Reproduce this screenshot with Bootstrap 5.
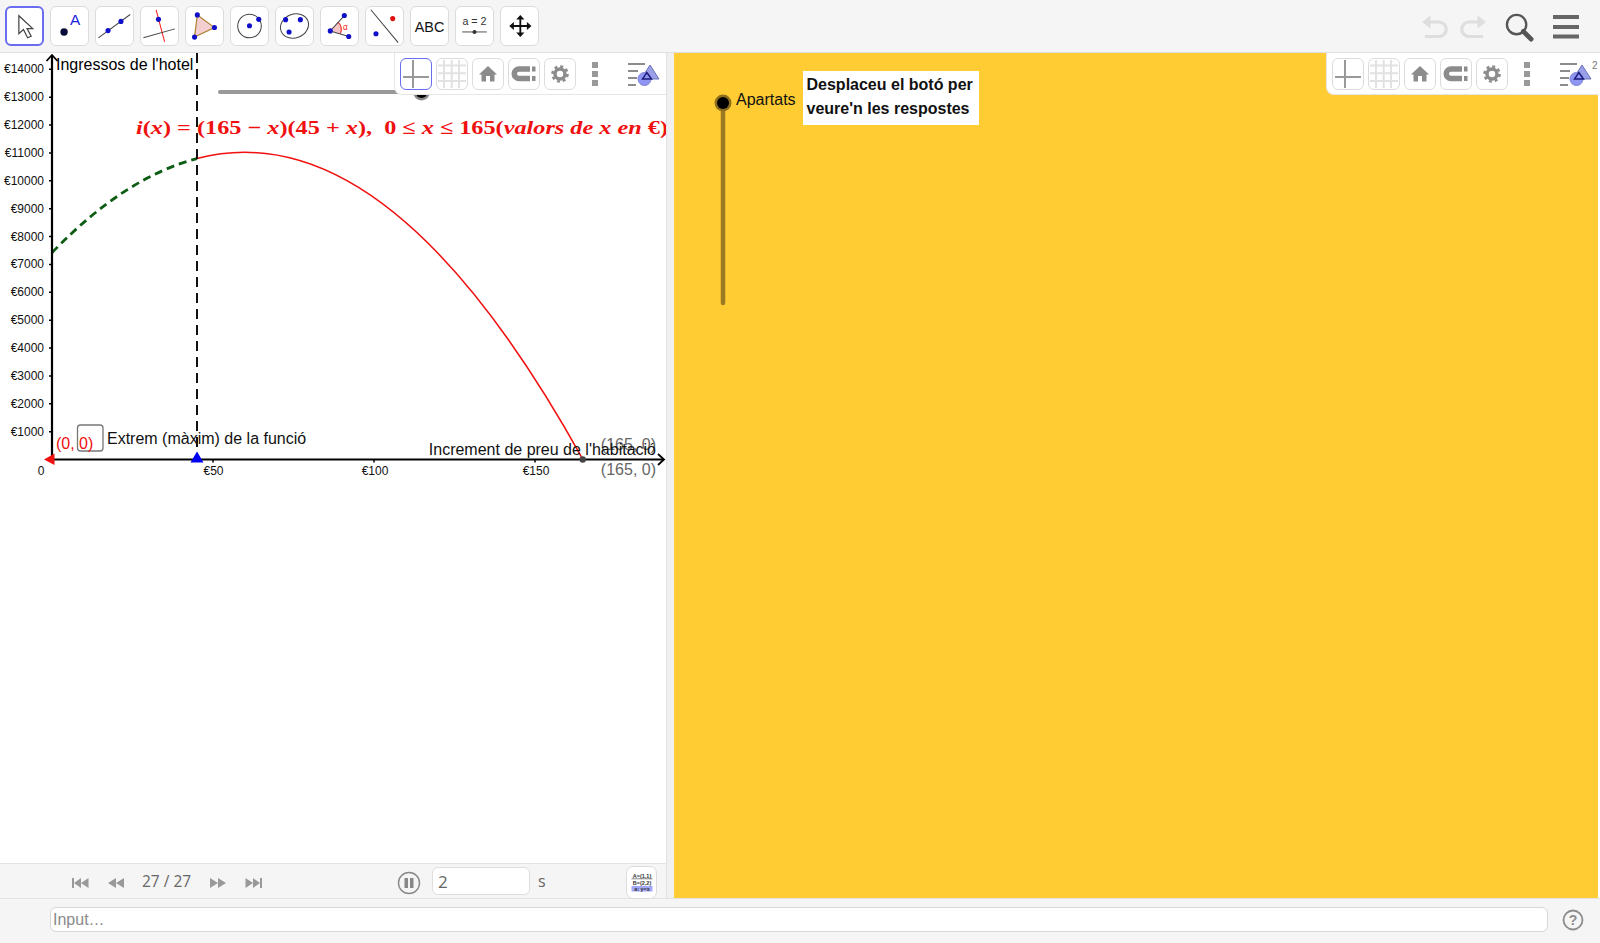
<!DOCTYPE html>
<html lang="en">
<head>
<meta charset="UTF-8">
<title>GeoGebra</title>
<link href="https://cdn.jsdelivr.net/npm/bootstrap@5.3.0/dist/css/bootstrap.min.css" rel="stylesheet">
<style>
  html, body { height: 100%; overflow: hidden; font-family: "Liberation Sans", Arial, sans-serif; }
  svg { display: block; }
  svg text { font-family: "Liberation Sans", Arial, sans-serif; }
  .top-bar { height: 53px; background: #f5f5f5; border-bottom: 1px solid #e0e0e0; padding: 6px 0 0 5px; flex: none; }
  .tool-row { gap: 6px; }
  .tool-btn { width: 39px; height: 40px; background: #fff; border: 1px solid #dcdcdc; border-radius: 6px; padding: 0; }
  .tool-btn.on { border: 2px solid #6a6df0; }
  .tool-btn svg { margin: -1px; }
  .tool-btn.on svg { margin: -2px; }
  .top-right { margin-left: auto; padding-right: 21px; }
  .undo-ico { margin-top: 9px; margin-right: 10px; }
  .redo-ico { margin-top: 9px; margin-right: 19px; }
  .find-ico { margin-top: 7px; margin-right: 19px; }
  .menu-ico { margin-top: 9px; }
  .gfx-panel { width: 666px; flex: none; }
  .gfx-canvas { flex: 1 1 auto; position: relative; background: #fff; min-height: 0; }
  .splitter { width: 8px; flex: none; background: #f0f0f0; border-left: 1px solid #e2e2e2; }
  .yellow-panel { flex: 1 1 auto; position: relative; background: #ffcc33; margin-right: 2px; }
  .float-bar { position: absolute; top: 0; right: 0; width: 272px; height: 42px; background: #fff; border-bottom: 1px solid #e6e6e6; border-left: 1px solid #e6e6e6; border-bottom-left-radius: 8px; padding: 5px 0 0 5px; gap: 4px; }
  .mini-btn { width: 32px; height: 32px; border: 1px solid #dcdcdc; border-radius: 6px; background: #fff; padding: 0; flex: none; }
  .mini-btn.on { border-color: #6a6df0; }
  .mini-btn svg { margin: -1px; }
  .dots-ico { margin-left: 9px; }
  .style-ico { margin-left: 22px; }
  .play-bar { height: 35px; flex: none; background: #f5f5f5; border-top: 1px solid #e2e2e2; position: relative; color: #666; }
  .play-ico { position: absolute; top: 14px; }
  .play-count { position: absolute; left: 142px; top: 7px; font-family: "Open Sans", sans-serif; font-size: 15.500px; line-height: 20px; }
  .play-pause { position: absolute; left: 397px; top: 7px; }
  .play-input { position: absolute; left: 432px; top: 3px; width: 98px; height: 28px; border: 1px solid #dedede; border-radius: 6px; background: #fff; padding: 0 5px; font-family: "Open Sans", sans-serif; font-size: 17px; color: #666; box-shadow: none; min-height: 0; }
  .play-s { position: absolute; left: 538px; top: 7px; font-family: "Open Sans", sans-serif; font-size: 16px; line-height: 20px; }
  .table-btn { position: absolute; left: 626px; top: 2px; width: 31px; height: 33px; background: #fff; border: 1px solid #dcdcdc; border-radius: 7px; padding: 0; }
  .input-bar { height: 45px; flex: none; background: #f5f5f5; border-top: 1px solid #e2e2e2; padding: 8px 0 0 50px; }
  .algebra-input { width: 1498px; height: 25px; min-height: 0; border: 1px solid #d8d8d8; border-radius: 6px; padding: 0 2px; font-size: 16px; color: #555; box-shadow: none; }
  .algebra-input::placeholder { color: #8a8a8a; opacity: 1; }
  .help-ico { margin-left: 14px; margin-top: 2px; }
  .style-two { left: 265px; top: 8px; font-size: 10px; line-height: 10px; color: #777; }
</style>
</head>
<body class="d-flex flex-column">

<svg width="0" height="0" class="position-absolute">
  <defs>
    <symbol id="ico-axes" viewBox="0 0 32 32"><path d="M13 2V30M3 19H29" stroke="#999" stroke-width="2" fill="none"/></symbol>
    <symbol id="ico-grid" viewBox="0 0 32 32"><path d="M8 2V30M15.700 2V30M23 2V30M2 7.500H30M2 15.300H30M2 23H30" stroke="#e2e2e2" stroke-width="2" fill="none"/></symbol>
    <symbol id="ico-home" viewBox="0 0 32 32"><path d="M16 8L25 16.500H22.500V23.500H18V18H14V23.500H9.500V16.500H7Z" fill="#8c8c8c"/></symbol>
    <symbol id="ico-magnet" viewBox="0 0 32 32"><path d="M22 11H11a4.500 4.500 0 0 0 0 9.500H22" stroke="#8c8c8c" stroke-width="5.500" fill="none"/><path d="M24 8.500h3.500v5H24zM24 18h3.500v5H24z" fill="#8c8c8c"/></symbol>
    <symbol id="ico-gear" viewBox="0 0 32 32"><circle cx="16" cy="16" r="5" fill="none" stroke="#8c8c8c" stroke-width="3.500"/><circle cx="16" cy="16" r="7.500" fill="none" stroke="#8c8c8c" stroke-width="2.600" stroke-dasharray="3 2.890"/></symbol>
    <symbol id="ico-dots" viewBox="0 0 12 32"><path d="M3 4h6v6H3zM3 13h6v6H3zM3 22h6v6H3z" fill="#999"/></symbol>
    <symbol id="ico-style" viewBox="0 0 34 32"><path d="M1 6H18M1 13H11M1 20H10M1 27H9" stroke="#8c8c8c" stroke-width="1.800" fill="none"/><path d="M23 7L32 21H14Z" fill="#9aa0e8" stroke="#6b70b8"/><circle cx="17.500" cy="21" r="6.500" fill="#8f95f2" stroke="#7a80d8"/><path d="M19.800 14.500L24.500 21H15.500Z" fill="none" stroke="#1c1c7a" stroke-width="1.400"/></symbol>
  </defs>
</svg>

<div class="top-bar d-flex">
  <div class="tool-row d-flex">
    <button class="tool-btn on"><svg width="39" height="40" viewBox="0 0 38 39"><path d="M13.500 9.500V27L18 23L22 31L25.500 29.500L21.500 22H27Z" fill="#fff" stroke="#444" stroke-width="1.200"/></svg></button>
    <button class="tool-btn"><svg width="39" height="40" viewBox="0 0 38 39"><circle cx="13.700" cy="25.300" r="3.600" fill="#0b0b3a"/><text x="19.500" y="19" font-size="15" fill="#1f1fe0">A</text></svg></button>
    <button class="tool-btn"><svg width="39" height="40" viewBox="0 0 38 39"><path d="M3.300 31L34.300 8.300" stroke="#444" stroke-width="1"/><circle cx="12.700" cy="24" r="2.500" fill="#1010c8"/><circle cx="25.300" cy="15" r="2.500" fill="#1010c8"/></svg></button>
    <button class="tool-btn"><svg width="39" height="40" viewBox="0 0 38 39"><path d="M15.700 3.700L24 35" stroke="#f02020" stroke-width="1"/><path d="M3.300 31L34 22.300" stroke="#444" stroke-width="1"/><circle cx="18" cy="13" r="2.500" fill="#1010c8"/></svg></button>
    <button class="tool-btn"><svg width="39" height="40" viewBox="0 0 38 39"><path d="M12 8.700L28.700 21L9.300 30.300Z" fill="#f3cfcf" stroke="#b08438" stroke-width="1.200"/><circle cx="12" cy="8.700" r="2.500" fill="#1010c8"/><circle cx="28.700" cy="21" r="2.500" fill="#1010c8"/><circle cx="9.300" cy="30.300" r="2.500" fill="#1010c8"/></svg></button>
    <button class="tool-btn"><svg width="39" height="40" viewBox="0 0 38 39"><circle cx="19" cy="19.500" r="11.500" fill="none" stroke="#444"/><circle cx="19" cy="19.300" r="2.500" fill="#1010c8"/><circle cx="28" cy="13" r="2.500" fill="#1010c8"/></svg></button>
    <button class="tool-btn"><svg width="39" height="40" viewBox="0 0 38 39"><ellipse cx="19" cy="19.500" rx="14" ry="11.500" transform="rotate(-22 19 19.500)" fill="none" stroke="#444"/><circle cx="10.300" cy="13.300" r="2.500" fill="#1010c8"/><circle cx="24.700" cy="13.300" r="2.500" fill="#1010c8"/><circle cx="13.700" cy="25.300" r="2.500" fill="#1010c8"/></svg></button>
    <button class="tool-btn"><svg width="39" height="40" viewBox="0 0 38 39"><path d="M10 24.300L17.500 15.700A10 10 0 0 1 20 26.800Z" fill="#f6c6c6"/><path d="M17.500 15.700A10 10 0 0 1 20 26.800" fill="none" stroke="#f02020"/><path d="M23.700 9.300L10 24.300L28 29.700" fill="none" stroke="#444"/><circle cx="23.700" cy="9.300" r="2.500" fill="#1010c8"/><circle cx="10" cy="24.300" r="2.500" fill="#1010c8"/><circle cx="28" cy="29.700" r="2.500" fill="#1010c8"/><text x="22.500" y="23" font-size="8" fill="#f02020">α</text></svg></button>
    <button class="tool-btn"><svg width="39" height="40" viewBox="0 0 38 39"><path d="M5.700 3.700L32.300 35.700" stroke="#444"/><circle cx="27" cy="12.300" r="2.500" fill="#e01010"/><circle cx="10.700" cy="27" r="2.500" fill="#1010c8"/></svg></button>
    <button class="tool-btn"><svg width="39" height="40" viewBox="0 0 38 39"><text x="19" y="25" font-size="14" text-anchor="middle" fill="#111">ABC</text></svg></button>
    <button class="tool-btn"><svg width="39" height="40" viewBox="0 0 38 39"><text x="19" y="18.500" font-size="10.500" text-anchor="middle" fill="#333">a = 2</text><path d="M7 25.300H31" stroke="#555"/><circle cx="19" cy="25.300" r="2" fill="#333"/></svg></button>
    <button class="tool-btn"><svg width="39" height="40" viewBox="0 0 38 39"><path d="M19.800 11V28M12 19.500H28" stroke="#111" stroke-width="1.800"/><path d="M19.800 8.700L23.800 13.200H15.800ZM19.800 30.300L23.800 25.800H15.800ZM9 19.500L13.500 15.500V23.500ZM30.700 19.500L26.200 15.500V23.500Z" fill="#111"/></svg></button>
  </div>
  <div class="top-right d-flex">
    <svg width="27" height="26" class="undo-ico" viewBox="0 0 27 26"><path d="M6 7H17a6.500 6.500 0 0 1 0 14.500H3" fill="none" stroke="#dedede" stroke-width="3.200"/><path d="M0 7L8.500 0.500V13.500Z" fill="#dedede"/></svg>
    <svg width="27" height="26" class="redo-ico" viewBox="0 0 27 26"><path d="M21 7H10a6.500 6.500 0 0 0 0 14.500H24" fill="none" stroke="#dedede" stroke-width="3.200"/><path d="M27 7L18.500 0.500V13.500Z" fill="#dedede"/></svg>
    <svg width="29" height="29" class="find-ico" viewBox="0 0 30 30"><circle cx="12" cy="12" r="10" fill="none" stroke="#555" stroke-width="2.400"/><path d="M19 19L27 27" stroke="#555" stroke-width="5" stroke-linecap="round"/></svg>
    <svg width="26" height="24" class="menu-ico" viewBox="0 0 26 24"><path d="M0 2H26M0 12H26M0 21.500H26" stroke="#666" stroke-width="3.800"/></svg>
  </div>
</div>

<div class="d-flex flex-grow-1" style="min-height:0">
  <div class="gfx-panel d-flex flex-column">
    <div class="gfx-canvas">
      <svg width="666" height="810" viewBox="0 53 666 810">
        <path d="M220 92H425" stroke="#999" stroke-width="4" stroke-linecap="round"/>
        <circle cx="421.500" cy="92" r="8.500" fill="#8a8a8a"/><circle cx="421.500" cy="92" r="6" fill="#000"/>

        <text x="136" y="134" font-size="19.500" fill="#f01010" font-weight="bold" textLength="532" lengthAdjust="spacingAndGlyphs" xml:space="preserve" style="font-family:'Liberation Serif',serif"><tspan font-style="italic">i</tspan>(<tspan font-style="italic">x</tspan>) = (165 − <tspan font-style="italic">x</tspan>)(45 + <tspan font-style="italic">x</tspan>),  0 ≤ <tspan font-style="italic">x</tspan> ≤ 165(<tspan font-style="italic">valors de x en</tspan> €)</text>

        <path d="M52 252.700Q124.450 177.400 196.900 158.600" fill="none" stroke="#0c5c14" stroke-width="2.800" stroke-dasharray="8 5"/>
        <path d="M196.900 158.600Q388.100 108.300 583 459.600" fill="none" stroke="#f01010" stroke-width="1.500"/>
        <path d="M197 53V459" stroke="#111" stroke-width="2" stroke-dasharray="10 6"/>

        <path d="M52 459.500H663M52 459.500V56" stroke="#000" stroke-width="2.200" fill="none"/>
        <path d="M658 454L664 459.500L658 465M46.500 61L52 55L57.500 61" stroke="#000" stroke-width="1.800" fill="none"/>
        <path d="M213 459V462.500M374 459V462.500M535 459V462.500M49 431.700H52M49 403.800H52M49 376H52M49 348H52M49 320.200H52M49 292.300H52M49 264.400H52M49 236.600H52M49 208.700H52M49 180.800H52M49 152.900H52M49 125H52M49 97.200H52M49 69.300H52" stroke="#000" stroke-width="1.500" fill="none"/>

        <g font-size="12" fill="#111" text-anchor="end">
          <text x="44" y="73.200">€14000</text>
          <text x="44" y="101.200">€13000</text>
          <text x="44" y="129">€12000</text>
          <text x="44" y="156.900">€11000</text>
          <text x="44" y="184.800">€10000</text>
          <text x="44" y="212.700">€9000</text>
          <text x="44" y="240.600">€8000</text>
          <text x="44" y="268.400">€7000</text>
          <text x="44" y="296.300">€6000</text>
          <text x="44" y="324.200">€5000</text>
          <text x="44" y="352">€4000</text>
          <text x="44" y="379.900">€3000</text>
          <text x="44" y="407.800">€2000</text>
          <text x="44" y="435.700">€1000</text>
        </g>
        <g font-size="12" fill="#111" text-anchor="middle">
          <text x="41" y="475">0</text>
          <text x="213.500" y="475">€50</text>
          <text x="375" y="475">€100</text>
          <text x="536" y="475">€150</text>
        </g>

        <text x="56" y="70" font-size="16" fill="#000">Ingressos de l'hotel</text>
        <rect x="77.500" y="425" width="25.500" height="26" rx="3" fill="none" stroke="#777" stroke-width="1.300"/>
        <text x="56" y="449" font-size="16" fill="#f01010">(0, 0)</text>
        <text x="107" y="444" font-size="16" fill="#111">Extrem (màxim) de la funció</text>
        <path d="M44 459.500L54.500 453.500V465Z" fill="#f01010"/>
        <path d="M197 451.500L203.500 462.500H190.500Z" fill="#0000f0"/>
        <text x="656" y="450" font-size="16" fill="#666" text-anchor="end">(165, 0)</text>
        <text x="656" y="455" font-size="16" fill="#111" text-anchor="end">Increment de preu de l'habitació</text>
        <text x="656" y="475" font-size="16" fill="#666" text-anchor="end">(165, 0)</text>
        <circle cx="582.700" cy="459.500" r="3.200" fill="#444"/>
      </svg>

      <div class="float-bar d-flex">
        <button class="mini-btn on"><svg width="32" height="32"><use href="#ico-axes"/></svg></button>
        <button class="mini-btn"><svg width="32" height="32"><use href="#ico-grid"/></svg></button>
        <button class="mini-btn"><svg width="32" height="32"><use href="#ico-home"/></svg></button>
        <button class="mini-btn"><svg width="32" height="32"><use href="#ico-magnet"/></svg></button>
        <button class="mini-btn"><svg width="32" height="32"><use href="#ico-gear"/></svg></button>
        <svg width="12" height="32" class="dots-ico"><use href="#ico-dots"/></svg>
        <svg width="34" height="32" class="style-ico"><use href="#ico-style"/></svg>
      </div>
    </div>

    <div class="play-bar">
      <svg class="play-ico" style="left:72px" width="17" height="10" viewBox="0 0 17 10"><path d="M0 0h2v10H0zM2 5L9 0v10zM9 5L16.500 0v10z" fill="#999"/></svg>
      <svg class="play-ico" style="left:108px" width="16" height="10" viewBox="0 0 16 10"><path d="M0 5L8 0v10zM8 5L16 0v10z" fill="#999"/></svg>
      <span class="play-count">27 / 27</span>
      <svg class="play-ico" style="left:210px" width="16" height="10" viewBox="0 0 16 10"><path d="M8 5L0 0v10zM16 5L8 0v10z" fill="#999"/></svg>
      <svg class="play-ico" style="left:245px" width="17" height="10" viewBox="0 0 17 10"><path d="M17 0h-2v10h2zM15 5L8 0v10zM8 5L.5 0v10z" fill="#999"/></svg>
      <svg class="play-pause" width="24" height="24" viewBox="0 0 24 24"><circle cx="12" cy="12" r="10.500" fill="none" stroke="#888" stroke-width="1.400"/><path d="M7.500 7h3.500v10H7.500zM13 7h3.500v10H13z" fill="#888"/></svg>
      <input class="play-input form-control" type="text" value="2">
      <span class="play-s">s</span>
      <button class="table-btn">
        <svg width="29" height="31" viewBox="0 0 29 30"><g font-size="5.500" fill="#333" text-anchor="middle" font-weight="bold"><text x="15" y="10">A=(1,1)</text><text x="15" y="17">B=(2,2)</text><rect x="4.500" y="18.500" width="21" height="5.500" fill="#a4a8f8"/><text x="15" y="23.200">a: y=x</text></g><path d="M4.500 11.300H25.500" stroke="#333" stroke-width=".6"/></svg>
      </button>
    </div>
  </div>

  <div class="splitter"></div>

  <div class="yellow-panel">
    <svg width="924" height="845" viewBox="674 53 924 845">
      <path d="M723 108V303" stroke="#9c7a22" stroke-width="4.500" stroke-linecap="round"/>
      <circle cx="723" cy="103" r="8.500" fill="#8f6f1e"/><circle cx="723" cy="103" r="6" fill="#000"/>
      <text x="736" y="105" font-size="16" fill="#111">Apartats</text>
      <rect x="803" y="71" width="176" height="54" fill="#fff"/>
      <text x="806.500" y="90" font-size="16" font-weight="bold" fill="#111">Desplaceu el botó per</text>
      <text x="806.500" y="114" font-size="16" font-weight="bold" fill="#111">veure'n les respostes</text>
    </svg>
    <div class="float-bar d-flex">
      <button class="mini-btn"><svg width="32" height="32"><use href="#ico-axes"/></svg></button>
      <button class="mini-btn"><svg width="32" height="32"><use href="#ico-grid"/></svg></button>
      <button class="mini-btn"><svg width="32" height="32"><use href="#ico-home"/></svg></button>
      <button class="mini-btn"><svg width="32" height="32"><use href="#ico-magnet"/></svg></button>
      <button class="mini-btn"><svg width="32" height="32"><use href="#ico-gear"/></svg></button>
      <svg width="12" height="32" class="dots-ico"><use href="#ico-dots"/></svg>
      <svg width="34" height="32" class="style-ico"><use href="#ico-style"/></svg>
      <span class="position-absolute style-two">2</span>
    </div>
  </div>
</div>

<div class="input-bar d-flex">
  <input class="algebra-input form-control" type="text" placeholder="Input…">
  <svg class="help-ico" width="22" height="22" viewBox="0 0 22 22"><circle cx="11" cy="11" r="9.500" fill="none" stroke="#8c8c8c" stroke-width="1.800"/><text x="11" y="16" font-size="14" font-weight="bold" fill="#8c8c8c" text-anchor="middle">?</text></svg>
</div>

<script src="https://cdn.jsdelivr.net/npm/bootstrap@5.3.0/dist/js/bootstrap.bundle.min.js"></script>
</body>
</html>
